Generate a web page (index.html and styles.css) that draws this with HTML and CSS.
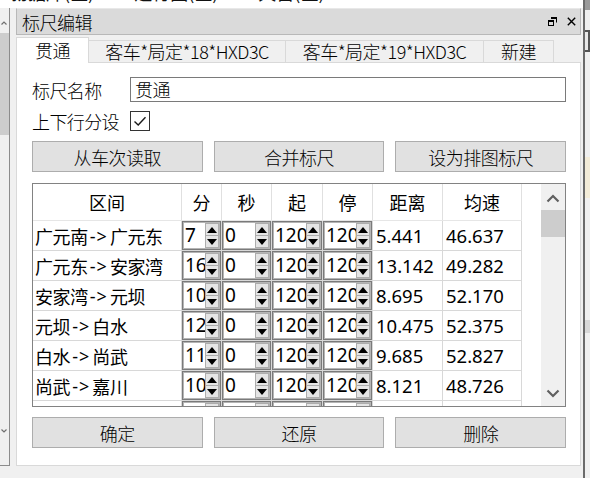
FILE: index.html
```html
<!DOCTYPE html>
<html lang="zh-CN">
<head>
<meta charset="utf-8">
<title>标尺编辑</title>
<link rel="stylesheet" href="styles.css">
</head>
<body>
<div class="frame">
  <div class="main-col">
    <div class="top-strip"><div class="top-strip-text"><span>勃据库(区)</span><span>运行图(区)</span><span>天窗(区)</span></div></div>
    <div class="workspace">
      <aside class="side-left">
        <svg class="side-chev" width="6" height="4" viewBox="0 0 6 4"><path d="M0.5 3.5 L3 1 L5.5 3.5" fill="none" stroke="#707070" stroke-width="1.2"/></svg>
        <div class="side-thumb"></div>
        <div class="side-fill"></div>
        <svg class="side-chev" width="6" height="4" viewBox="0 0 6 4"><path d="M0.5 0.5 L3 3 L5.5 0.5" fill="none" stroke="#707070" stroke-width="1.2"/></svg>
      </aside>
      <section class="dock">
        <header class="dock-title">
          <span class="dock-name">标尺编辑</span>
          <span class="dock-btns">
            <svg width="9" height="9" viewBox="0 0 9 9"><path d="M3 0.5 H8.5 V5.5" fill="none" stroke="#000" stroke-width="1"/><path d="M3 1 H9" stroke="#000" stroke-width="2"/><rect x="0.5" y="3.5" width="5" height="5" fill="#dadada" stroke="#000" stroke-width="1"/><path d="M0 4 H6" stroke="#000" stroke-width="2"/></svg>
            <svg width="9" height="9" viewBox="0 0 9 9"><path d="M0.8 0.8 L8.2 8.2 M8.2 0.8 L0.8 8.2" stroke="#000" stroke-width="1.4"/></svg>
          </span>
        </header>
        <div class="dock-body">
          <nav class="tabs">
            <div class="tab active tab-w1">贯通</div>
            <div class="tab tab-w2">客车*局定*18*HXD3C</div>
            <div class="tab tab-w3">客车*局定*19*HXD3C</div>
            <div class="tab tab-w4">新建</div>
          </nav>
          <div class="pane">
            <div class="form-row name-row">
              <span class="form-label">标尺名称</span>
              <div class="line-edit">贯通</div>
            </div>
            <div class="form-row check-row">
              <span class="form-label">上下行分设</span>
              <span class="checkbox"><svg width="18" height="18" viewBox="0 0 18 18"><path d="M3.5 9.5 L7.2 13 L14.5 5.2" fill="none" stroke="#1a1a1a" stroke-width="1.4"/></svg></span>
            </div>
            <div class="btn-row">
              <button class="btn">从车次读取</button>
              <button class="btn">合并标尺</button>
              <button class="btn">设为排图标尺</button>
            </div>
            <div class="grid-table">
              <div class="grid-main">
                <div class="thead">
                  <div>区间</div><div>分</div><div>秒</div><div>起</div><div>停</div><div>距离</div><div>均速</div>
                </div>
                <div class="tbody" id="tbody"></div>
              </div>
              <div class="gap-col"></div>
              <div class="vscroll">
                <svg class="vs-chev" width="14" height="9" viewBox="0 0 14 9"><path d="M1.5 7.5 L7 2 L12.5 7.5" fill="none" stroke="#606060" stroke-width="2.2"/></svg>
                <div class="vs-thumb"></div>
                <div class="vs-track"></div>
                <svg class="vs-chev" width="14" height="9" viewBox="0 0 14 9"><path d="M1.5 1.5 L7 7 L12.5 1.5" fill="none" stroke="#606060" stroke-width="2.2"/></svg>
              </div>
            </div>
            <div class="btn-row bottom-row">
              <button class="btn">确定</button>
              <button class="btn">还原</button>
              <button class="btn">删除</button>
            </div>
          </div>
        </div>
      </section>
    </div>
  </div>
  <aside class="side-right">
    <div class="sr-top"></div>
    <div class="sr-box"></div>
    <div class="sr-gap1"></div>
    <div class="sr-beige"></div>
    <div class="sr-gap2"></div>
    <div class="sr-band"></div>
  </aside>
</div>
<script src="app.js"></script>
</body>
</html>
```

FILE: app.js
```js
// Ruler rows: section, minutes, seconds, start, stop, distance, average speed
const rows = [
  ["广元南->广元东", "7", "0", "120", "120", "5.441", "46.637"],
  ["广元东->安家湾", "16", "0", "120", "120", "13.142", "49.282"],
  ["安家湾->元坝", "10", "0", "120", "120", "8.695", "52.170"],
  ["元坝->白水", "12", "0", "120", "120", "10.475", "52.375"],
  ["白水->尚武", "11", "0", "120", "120", "9.685", "52.827"],
  ["尚武->嘉川", "10", "0", "120", "120", "8.121", "48.726"],
  ["嘉川->朝天", "9", "0", "120", "120", "7.310", "48.733"]
];

const spinButtons =
  '<span class="spin-btns">' +
  '<span class="spin-btn"><svg width="10" height="6" viewBox="0 0 10 6"><path d="M0 6 L5 0 L10 6 Z" fill="#000"/></svg></span>' +
  '<span class="spin-btn"><svg width="10" height="6" viewBox="0 0 10 6"><path d="M0 0 L10 0 L5 6 Z" fill="#000"/></svg></span>' +
  '</span>';

function spin(value) {
  return '<div class="cell spin-cell"><div class="spin"><span class="spin-val">' +
    value + '</span>' + spinButtons + '</div></div>';
}

function section(text) {
  const parts = text.split("->");
  return '<div class="cell text-cell sect">' + parts[0] +
    '<span class="arrow">-&gt;</span>' + parts[1] + '</div>';
}

const body = document.getElementById("tbody");
body.innerHTML = rows.map(r =>
  '<div class="trow">' + section(r[0]) + spin(r[1]) + spin(r[2]) + spin(r[3]) + spin(r[4]) +
  '<div class="cell text-cell num">' + r[5] + '</div>' +
  '<div class="cell text-cell num">' + r[6] + '</div></div>'
).join("");
```

FILE: styles.css
```css
* { box-sizing: border-box; }

html, body {
  margin: 0;
  padding: 0;
}

body {
  width: 590px;
  height: 478px;
  overflow: hidden;
  background: #f0f0f0;
  font-family: "Noto Sans CJK SC", sans-serif;
  color: #000;
}

.frame {
  display: flex;
  height: 478px;
}

.main-col {
  width: 583px;
  display: flex;
  flex-direction: column;
}

/* cut-off row of the panel above */
.top-strip {
  height: 8px;
  background: #fff;
  overflow: hidden;
}

.top-strip-text {
  margin-top: -18px;
  padding-left: 10px;
  display: flex;
  gap: 40px;
  font-size: 18px;
  line-height: 20px;
  white-space: nowrap;
  color: #111;
}

.workspace {
  display: flex;
  height: 470px;
}

/* neighbouring panel with its scrollbar */
.side-left {
  width: 10px;
  height: 458px;
  border-right: 1px solid #8c8c8c;
  border-bottom: 1px solid #8c8c8c;
  display: flex;
  flex-direction: column;
  align-items: center;
  padding-top: 13px;
}

.side-chev {
  flex: none;
  margin-left: -1px;
}

.side-thumb {
  width: 9px;
  height: 102px;
  margin-top: 8px;
  margin-left: -1px;
  background: #cdcdcd;
}

.side-fill { flex: 1; }

.side-left .side-chev:last-child { margin-bottom: 32px; }

.dock {
  width: 565px;
  margin-left: 6px;
  display: flex;
  flex-direction: column;
}

.dock-title {
  height: 27px;
  background: #dadada;
  border: 1px solid #b8b8b8;
  border-top-color: #e8e8e8;
  display: flex;
  align-items: center;
  justify-content: space-between;
  padding: 0 4px 0 5px;
}

.dock-name {
  font-size: 18px;
  line-height: 20px;
  font-weight: 300;
  letter-spacing: -0.5px;
}

.dock-btns {
  display: flex;
  gap: 10px;
  align-items: center;
}

.dock-btns svg { display: block; }

.dock-body {
  display: flex;
  flex-direction: column;
}

.tabs {
  display: flex;
  align-items: flex-end;
  height: 27px;
}

.tab {
  height: 22px;
  border: 1px solid #d9d9d9;
  border-bottom: none;
  border-left: none;
  background: #f0f0f0;
  font-size: 18px;
  line-height: 21px;
  font-weight: 300;
  text-align: center;
  white-space: nowrap;
  letter-spacing: -0.5px;
}

.tab.active {
  height: 26px;
  background: #fff;
  border-left: 1px solid #d9d9d9;
  margin-bottom: -1px;
  position: relative;
  z-index: 1;
  line-height: 24px;
}

.tab-w1 { width: 73px; }
.tab-w2 { width: 197px; }
.tab-w3 { width: 198px; }
.tab-w4 { width: 70px; }

.pane {
  height: 404px;
  background: #fff;
  border: 1px solid #d9d9d9;
  padding: 14px 14px 0 15px;
  display: flex;
  flex-direction: column;
}

.form-row {
  display: flex;
  align-items: center;
}

.form-label {
  width: 98px;
  font-size: 18px;
  line-height: 20px;
  font-weight: 300;
  letter-spacing: -0.6px;
}

.name-row { height: 25px; }

.line-edit {
  flex: 1;
  height: 25px;
  border: 1px solid #7a7a7a;
  font-size: 18px;
  line-height: 22px;
  font-weight: 300;
  padding-left: 4px;
  letter-spacing: -0.5px;
}

.check-row {
  height: 21px;
  margin-top: 8px;
}

.checkbox {
  width: 20px;
  height: 20px;
  border: 1px solid #333;
  background: #fff;
  display: flex;
  align-items: center;
  justify-content: center;
}

.checkbox svg { display: block; }

.btn-row {
  display: grid;
  grid-template-columns: repeat(3, 1fr);
  gap: 11px;
  margin-top: 10px;
}

.btn {
  height: 31px;
  margin: 0;
  padding: 0;
  background: #e1e1e1;
  border: 1px solid #adadad;
  font-family: "Noto Sans CJK SC", sans-serif;
  font-size: 18px;
  line-height: 20px;
  font-weight: 300;
  color: #000;
  letter-spacing: -0.5px;
}

.bottom-row { margin-top: 10px; }

/* ruler table */
.grid-table {
  height: 224px;
  margin-top: 11px;
  border: 1px solid #828282;
  display: flex;
  background: #fff;
}

.grid-main {
  width: 489px;
  overflow: hidden;
}

.gap-col { width: 19px; }

.vscroll {
  width: 24px;
  background: #f0f0f0;
  display: flex;
  flex-direction: column;
  align-items: center;
  padding-top: 10px;
}

.vs-chev { flex: none; display: block; }

.vs-thumb {
  width: 24px;
  height: 27px;
  margin-top: 7px;
  background: #cdcdcd;
}

.vs-track { flex: 1; }

.vscroll .vs-chev:last-child { margin-bottom: 8px; }

.thead,
.trow {
  display: grid;
  grid-template-columns: 149px 40px 50px 51px 50px 70px 79px;
}

.thead {
  height: 37px;
  border-bottom: 1px solid #e6e6e6;
}

.thead > div {
  border-right: 1px solid #e0e0e0;
  display: flex;
  align-items: center;
  justify-content: center;
  font-size: 18px;
  line-height: 20px;
}

.trow { height: 30px; }

.cell {
  border-right: 1px solid #d8d8d8;
  border-bottom: 1px solid #d8d8d8;
  overflow: hidden;
}

.text-cell {
  display: flex;
  align-items: center;
  padding-left: 2px;
  font-size: 18px;
  white-space: nowrap;
}

.sect { letter-spacing: -0.4px; }

.arrow {
  font-family: "Noto Sans", sans-serif;
  padding: 0 2px;
  letter-spacing: 1px;
}

.num {
  font-family: "Noto Sans", sans-serif;
  font-size: 18.5px;
  padding-left: 3px;
}

.spin-cell { display: flex; }

.spin {
  flex: 1;
  display: flex;
  border: 1px solid #7a7a7a;
  box-shadow: inset 1px 1px 0 #b5b5b5, inset -1px -1px 0 #b5b5b5;
  background: #fff;
  overflow: hidden;
}

.spin-val {
  flex: 1;
  min-width: 0;
  overflow: hidden;
  font-family: "Noto Sans", sans-serif;
  font-size: 19px;
  line-height: 27px;
  padding-left: 2px;
  white-space: nowrap;
}

.spin-btns {
  width: 15px;
  flex: none;
  display: flex;
  flex-direction: column;
  padding: 1px 1px 1px 0;
}

.spin-btn {
  flex: 1;
  background: #e5e5e5;
  border: 1px solid #adadad;
  display: flex;
  align-items: center;
  justify-content: center;
}

.spin-btn + .spin-btn { border-top: none; }

.spin-btn svg { display: block; }

/* neighbouring panel edge on the right */
.side-right {
  width: 7px;
  border-left: 2px solid #6b6b6b;
  display: flex;
  flex-direction: column;
}

.sr-top { height: 10px; background: #9a9a9a; }
.sr-box { height: 22px; margin-top: 20px; border: 2px solid #555; border-left: none; background: #e8e8e8; }
.sr-gap1 { height: 105px; }
.sr-beige { height: 41px; background: #f3ecd8; }
.sr-gap2 { height: 122px; }
.sr-band { height: 13px; background: #d8d8d8; }
```
